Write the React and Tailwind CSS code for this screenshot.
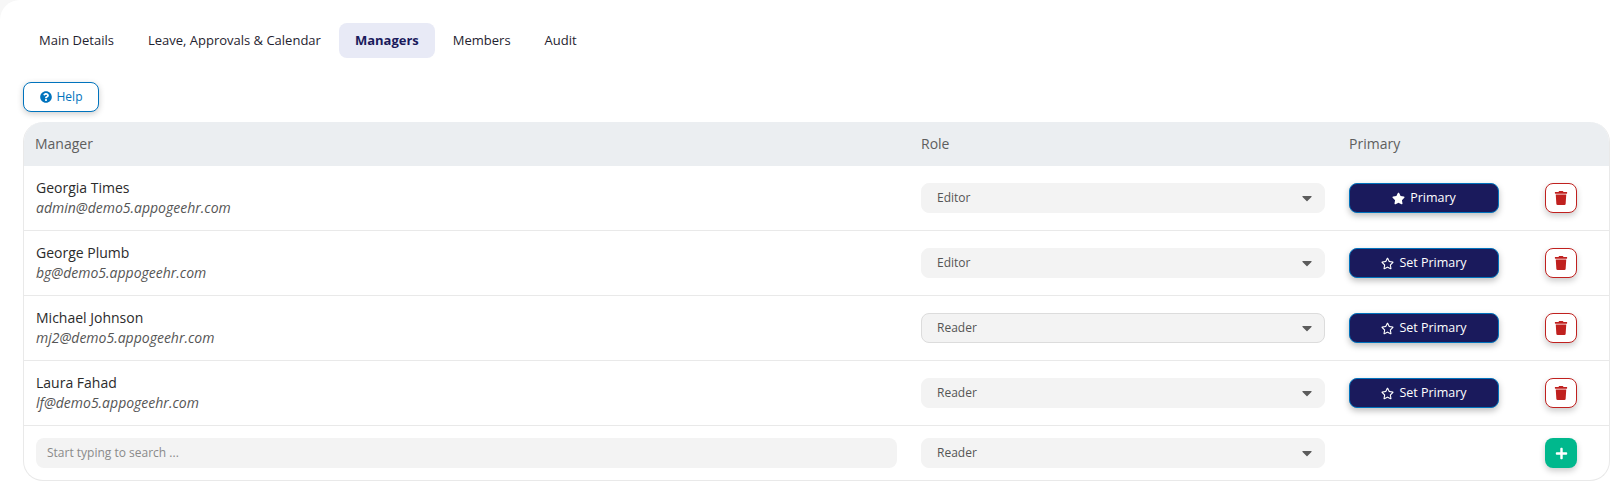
import { FaQuestionCircle, FaStar, FaRegStar, FaTrash, FaPlus, FaCaretDown } from 'react-icons/fa';

const tabs = ['Main Details', 'Leave, Approvals & Calendar', 'Managers', 'Members', 'Audit'];

const managers = [
  { name: 'Georgia Times', email: 'admin@demo5.appogeehr.com', role: 'Editor', primary: true },
  { name: 'George Plumb', email: 'bg@demo5.appogeehr.com', role: 'Editor' },
  { name: 'Michael Johnson', email: 'mj2@demo5.appogeehr.com', role: 'Reader', focused: true },
  { name: 'Laura Fahad', email: 'lf@demo5.appogeehr.com', role: 'Reader' },
];

function RoleSelect({ value, focused }) {
  return (
    <div
      className={`flex h-[30px] items-center justify-between rounded-lg border bg-[#f3f3f3] pl-[15px] pr-[9px] text-xs text-[#555] ${
        focused ? 'border-[#dcdcdc]' : 'border-[#f3f3f3]'
      }`}
    >
      <span>{value}</span>
      <FaCaretDown size={16} color="#5c5c5c" />
    </div>
  );
}

export default function App() {
  return (
    <div className="h-[486px] w-[1613px] overflow-hidden bg-[#f7f7f7] font-['Open_Sans',sans-serif]">
      <div className="h-full rounded-tl-[20px] bg-white pl-[23px] pr-[3px] pt-[23px]">

        {/* Tabs */}
        <div className="flex gap-0.5 text-[13px] text-[#1f2330]">
          {tabs.map((t) => (
            <div
              key={t}
              className={
                t === 'Managers'
                  ? 'flex h-[35px] items-center rounded-lg bg-[#e8eaf6] px-4 font-bold text-[#1a1a5c]'
                  : 'flex h-[35px] items-center rounded-lg px-4'
              }
            >
              {t}
            </div>
          ))}
        </div>

        {/* Help */}
        <button className="mt-6 flex h-[30px] w-[76px] items-center justify-center gap-[5px] rounded-lg border border-[#0073bd] bg-white text-xs text-[#0073bd] shadow-[0_2px_6px_rgba(0,0,0,0.2)]">
          <FaQuestionCircle size={12} />
          Help
        </button>

        {/* Managers table */}
        <div className="mt-[10px] h-[359px] overflow-hidden rounded-[20px] border border-t-0 border-[#e9e9e9]">
          <div className="grid h-11 grid-cols-[886px_428px_1fr] items-center bg-[#ebeef1] pl-[11px] text-sm text-[#5e5e5e]">
            <div>Manager</div>
            <div>Role</div>
            <div>Primary</div>
          </div>

          {managers.map((m) => (
            <div
              key={m.email}
              className="grid h-[65px] grid-cols-[861px_404px_150px_32px] items-center gap-x-6 border-b border-[#e9e9e9] pl-3"
            >
              <div className="text-sm leading-5 text-[#2b2b2b]">
                <div>{m.name}</div>
                <div className="italic text-[#555]">{m.email}</div>
              </div>
              <RoleSelect value={m.role} focused={m.focused} />
              <button className="flex h-[30px] items-center justify-center gap-[5px] rounded-lg border border-[#0073bd] bg-[#1a1a5c] text-[12.5px] text-white shadow-[0_3px_6px_rgba(0,0,0,0.25)]">
                {m.primary ? <FaStar size={13} /> : <FaRegStar size={13} />}
                {m.primary ? 'Primary' : 'Set Primary'}
              </button>
              <button className="ml-[22px] flex h-[30px] w-8 items-center justify-center rounded-lg border border-[#c0211f] bg-white text-[#c0211f] shadow-[0_3px_6px_rgba(0,0,0,0.2)]">
                <FaTrash size={14} />
              </button>
            </div>
          ))}

          {/* Add row */}
          <div className="grid h-[54px] grid-cols-[861px_404px_150px_32px] items-center gap-x-6 pl-3">
            <div className="flex h-[30px] items-center rounded-lg bg-[#f3f3f3] pl-[11px] text-xs text-[#8a8a8a]">
              Start typing to search ...
            </div>
            <RoleSelect value="Reader" />
            <div />
            <button className="ml-[22px] flex h-[30px] w-8 items-center justify-center rounded-lg bg-[#00b88d] text-white shadow-[0_3px_6px_rgba(0,0,0,0.2)]">
              <FaPlus size={13} />
            </button>
          </div>
        </div>
      </div>
    </div>
  );
}
